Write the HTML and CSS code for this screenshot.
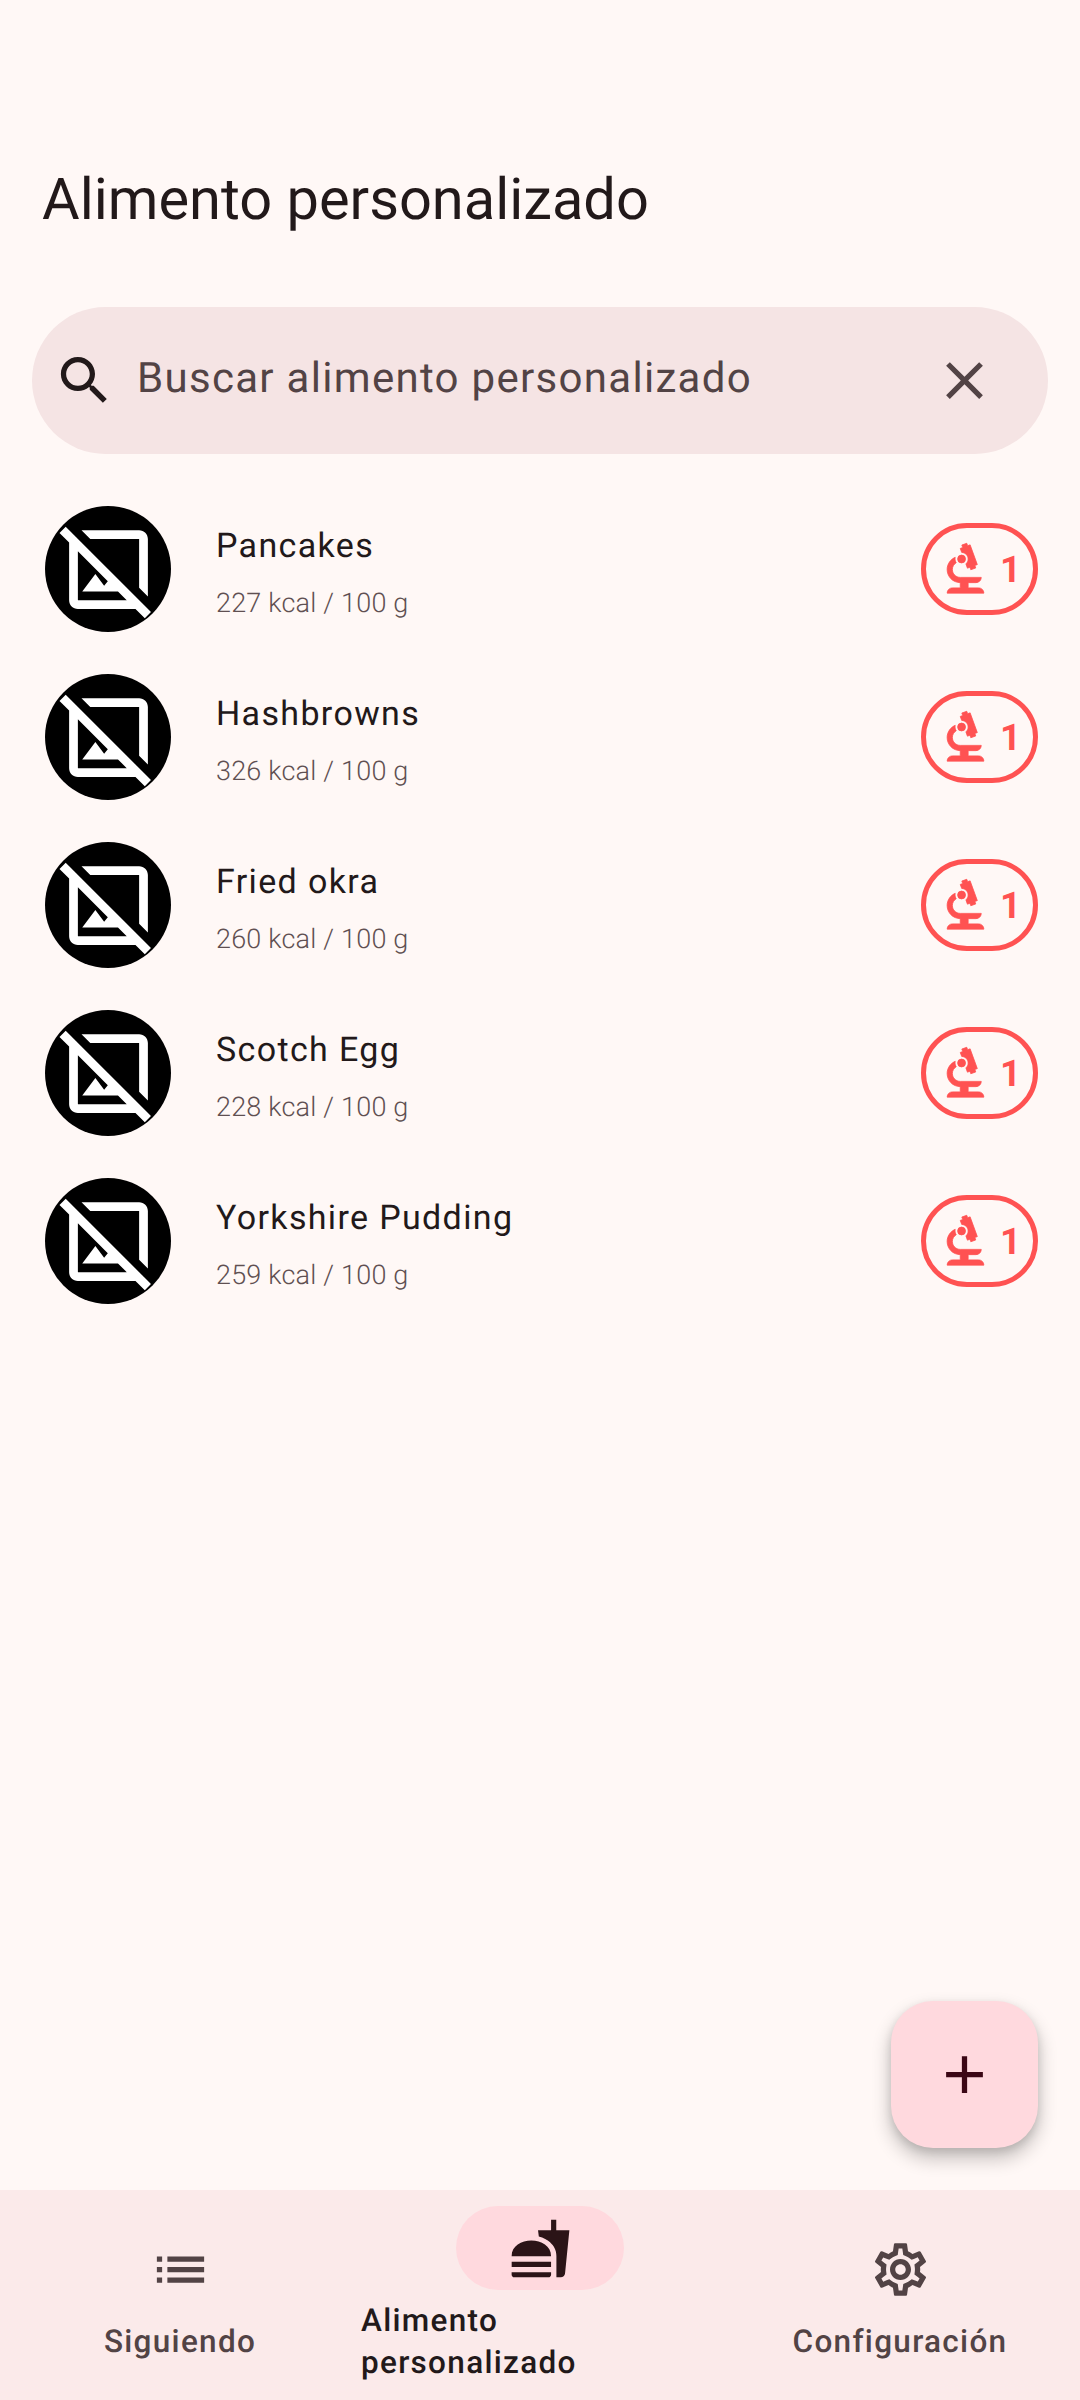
FILE: index.html
```html
<!DOCTYPE html>
<html lang="es">
<head>
    <meta charset="UTF-8">
    <meta name="viewport" content="width=device-width, initial-scale=1.0">
    <title>Alimento personalizado</title>
    <link rel="stylesheet" href="styles.css">
</head>
<body>
    <svg class="iconDefs" width="0" height="0">
        <defs>
            <symbol id="hideImage" viewBox="0 0 24 24"><path d="M19 5v11.17l2 2V5c0-1.1-.9-2-2-2H5.83l2 2H19zM2.22 2.22 .8 3.63 3 5.83V19c0 1.1.9 2 2 2h13.17l2.13 2.13 1.41-1.41L2.22 2.22zM5 19V7.83l6.84 6.84-.84 1.05L9 13l-3 4h8.17l2 2H5z"/></symbol>
            <symbol id="biotech" viewBox="0 0 24 24"><path d="M7 19c-1.1 0-2 .9-2 2h14c0-1.1-.9-2-2-2h-4v-2h3c1.1 0 2-.9 2-2h-8c-1.66 0-3-1.34-3-3 0-1.09.59-2.04 1.46-2.56C8.17 9.03 8 8.54 8 8c0-.21.04-.42.09-.62C6.28 8.13 5 9.92 5 12c0 2.76 2.24 5 5 5v2H7z"/><path d="M10.56 5.51C11.91 5.54 13 6.64 13 8c0 .75-.33 1.41-.85 1.87l.59 1.62.94-.34.34.94 1.88-.68-.34-.94.94-.34-2.74-7.52-.94.34-.34-.94-1.88.68.34.94-.94.35.56 1.53z"/><circle cx="10.5" cy="8" r="1.5"/></symbol>
        </defs>
    </svg>

    <header class="appBar">
        <h1 class="pageTitle">Alimento personalizado</h1>
    </header>

    <div class="searchBar">
        <svg class="searchIcon" viewBox="0 0 24 24"><path d="M15.5 14h-.79l-.28-.27C15.41 12.59 16 11.11 16 9.5 16 5.91 13.09 3 9.5 3S3 5.91 3 9.5 5.91 16 9.5 16c1.61 0 3.09-.59 4.23-1.57l.27.28v.79l5 4.99L20.49 19l-4.99-5zm-6 0C7.01 14 5 11.99 5 9.5S7.01 5 9.5 5 14 7.01 14 9.5 11.99 14 9.5 14z"/></svg>
        <span class="searchText">Buscar alimento personalizado</span>
        <svg class="closeIcon" viewBox="0 0 24 24"><path d="M19 6.41L17.59 5 12 10.59 6.41 5 5 6.41 10.59 12 5 17.59 6.41 19 12 13.41 17.59 19 19 17.59 13.41 12z"/></svg>
    </div>

    <ul class="foodList">
        <li class="foodRow">
            <div class="avatar"><svg class="avatarIcon"><use href="#hideImage"/></svg></div>
            <div class="foodInfo">
                <span class="foodName">Pancakes</span>
                <span class="foodKcal">227 kcal / 100 g</span>
            </div>
            <div class="scoreChip"><svg class="chipIcon"><use href="#biotech"/></svg><span class="chipCount">1</span></div>
        </li>
        <li class="foodRow">
            <div class="avatar"><svg class="avatarIcon"><use href="#hideImage"/></svg></div>
            <div class="foodInfo">
                <span class="foodName">Hashbrowns</span>
                <span class="foodKcal">326 kcal / 100 g</span>
            </div>
            <div class="scoreChip"><svg class="chipIcon"><use href="#biotech"/></svg><span class="chipCount">1</span></div>
        </li>
        <li class="foodRow">
            <div class="avatar"><svg class="avatarIcon"><use href="#hideImage"/></svg></div>
            <div class="foodInfo">
                <span class="foodName">Fried okra</span>
                <span class="foodKcal">260 kcal / 100 g</span>
            </div>
            <div class="scoreChip"><svg class="chipIcon"><use href="#biotech"/></svg><span class="chipCount">1</span></div>
        </li>
        <li class="foodRow">
            <div class="avatar"><svg class="avatarIcon"><use href="#hideImage"/></svg></div>
            <div class="foodInfo">
                <span class="foodName">Scotch Egg</span>
                <span class="foodKcal">228 kcal / 100 g</span>
            </div>
            <div class="scoreChip"><svg class="chipIcon"><use href="#biotech"/></svg><span class="chipCount">1</span></div>
        </li>
        <li class="foodRow">
            <div class="avatar"><svg class="avatarIcon"><use href="#hideImage"/></svg></div>
            <div class="foodInfo">
                <span class="foodName">Yorkshire Pudding</span>
                <span class="foodKcal">259 kcal / 100 g</span>
            </div>
            <div class="scoreChip"><svg class="chipIcon"><use href="#biotech"/></svg><span class="chipCount">1</span></div>
        </li>
    </ul>

    <button class="addButton" type="button">
        <svg class="addIcon" viewBox="0 0 24 24"><path d="M19 13h-6v6h-2v-6H5v-2h6V5h2v6h6v2z"/></svg>
    </button>

    <nav class="bottomNav">
        <div class="navItem">
            <div class="navPill">
                <svg class="navIcon" viewBox="0 0 24 24"><path d="M3 13h2v-2H3v2zm0 4h2v-2H3v2zm0-8h2V7H3v2zm4 4h14v-2H7v2zm0 4h14v-2H7v2zM7 7v2h14V7H7z"/></svg>
            </div>
            <span class="navLabel">Siguiendo</span>
        </div>
        <div class="navItem navItemActive">
            <div class="navPill">
                <svg class="navIcon" viewBox="0 0 24 24"><path d="M18.06 22.99h1.66c.84 0 1.53-.64 1.63-1.46L23 5.05h-5V1h-1.97v4.05h-4.97l.3 2.34c1.71.47 3.31 1.3 4.27 2.24 1.44 1.42 2.43 2.89 2.43 5.29v8.07zM1 21.99V21h15.03v.99c0 .55-.45 1-1.01 1H2.01c-.56 0-1.01-.45-1.01-1zm15.03-7c0-8-15.03-8-15.03 0h15.03zM1.02 17h15v2h-15z"/></svg>
            </div>
            <span class="navLabel">Alimento<br>personalizado</span>
        </div>
        <div class="navItem">
            <div class="navPill">
                <svg class="navIcon" viewBox="0 0 24 24"><path d="M19.43 12.98c.04-.32.07-.64.07-.98 0-.34-.03-.66-.07-.98l2.11-1.65c.19-.15.24-.42.12-.64l-2-3.46c-.09-.16-.26-.25-.44-.25-.06 0-.12.01-.17.03l-2.49 1c-.52-.4-1.08-.73-1.69-.98l-.38-2.65C14.46 2.18 14.25 2 14 2h-4c-.25 0-.46.18-.49.42l-.38 2.65c-.61.25-1.17.59-1.69.98l-2.49-1c-.06-.02-.12-.03-.18-.03-.17 0-.34.09-.43.25l-2 3.46c-.13.22-.07.49.12.64l2.11 1.65c-.04.32-.07.65-.07.98 0 .33.03.66.07.98l-2.11 1.65c-.19.15-.24.42-.12.64l2 3.46c.09.16.26.25.44.25.06 0 .12-.01.17-.03l2.49-1c.52.4 1.08.73 1.69.98l.38 2.65c.03.24.24.42.49.42h4c.25 0 .46-.18.49-.42l.38-2.65c.61-.25 1.17-.59 1.69-.98l2.49 1c.06.02.12.03.18.03.17 0 .34-.09.43-.25l2-3.46c.12-.22.07-.49-.12-.64l-2.11-1.65zm-1.98-1.71c.04.31.05.52.05.73 0 .21-.02.43-.05.73l-.14 1.13.89.7 1.08.84-.7 1.21-1.27-.51-1.04-.42-.9.68c-.43.32-.84.56-1.25.73l-1.06.43-.16 1.13-.2 1.35h-1.4l-.19-1.35-.16-1.13-1.06-.43c-.43-.18-.83-.41-1.23-.71l-.91-.7-1.06.43-1.27.51-.7-1.21 1.08-.84.89-.7-.14-1.13c-.03-.31-.05-.54-.05-.74s.02-.43.05-.73l.14-1.13-.89-.7-1.08-.84.7-1.21 1.27.51 1.04.42.9-.68c.43-.32.84-.56 1.25-.73l1.06-.43.16-1.13.2-1.35h1.39l.19 1.35.16 1.13 1.06.43c.43.18.83.41 1.23.71l.91.7 1.06-.43 1.27-.51.7 1.21-1.07.85-.89.7.14 1.13zM12 8c-2.21 0-4 1.79-4 4s1.79 4 4 4 4-1.79 4-4-1.79-4-4-4zm0 6c-1.1 0-2-.9-2-2s.9-2 2-2 2 .9 2 2-.9 2-2 2z"/></svg>
            </div>
            <span class="navLabel">Configuración</span>
        </div>
    </nav>
</body>
</html>
```

FILE: styles.css
```css
* {
    box-sizing: border-box;
}

body {
    font-family: Roboto, sans-serif;
    background-color: #fff8f6;
    color: #22191a;
    margin: 0;
    height: 2400px;
    width: 1080px;
    display: flex;
    flex-direction: column;
    overflow: hidden;
    text-rendering: geometricPrecision;
}

.iconDefs {
    position: absolute;
}

.appBar {
    padding: 164px 42px 0;
    height: 307px;
}

.pageTitle {
    margin: 0;
    font-size: 57.75px;
    line-height: 72px;
    font-weight: 400;
}

.searchBar {
    margin: 0 32px;
    height: 147px;
    border-radius: 74px;
    background-color: #f5e4e4;
    display: flex;
    align-items: center;
    padding: 0 52px 0 21px;
}

.searchIcon {
    width: 63px;
    height: 63px;
    fill: #22191a;
}

.searchText {
    flex: 1;
    margin-left: 21px;
    padding-bottom: 4px;
    font-size: 42px;
    letter-spacing: 1.3px;
    color: #524345;
}

.closeIcon {
    width: 63px;
    height: 63px;
    fill: #524345;
}

.foodList {
    list-style: none;
    margin: 31px 0 0;
    padding: 0;
}

.foodRow {
    height: 168px;
    display: flex;
    align-items: center;
    padding: 0 42px 0 45px;
}

.avatar {
    width: 126px;
    height: 126px;
    border-radius: 50%;
    background-color: #000;
    display: flex;
    align-items: center;
    justify-content: center;
}

.avatarIcon {
    width: 105px;
    height: 105px;
    fill: #fff;
}

.foodInfo {
    flex: 1;
    margin-left: 45px;
    padding-top: 7px;
    display: flex;
    flex-direction: column;
    gap: 17px;
}

.foodName {
    font-size: 34px;
    line-height: 44px;
    letter-spacing: 1.35px;
}

.foodKcal {
    font-size: 27px;
    line-height: 36px;
    font-weight: 300;
    letter-spacing: 0.2px;
    color: #5f5052;
}

.scoreChip {
    width: 117px;
    height: 92px;
    border: 5.5px solid #ff5252;
    border-radius: 46px;
    display: flex;
    align-items: center;
    padding-left: 8px;
    color: #ff5252;
}

.chipIcon {
    width: 63px;
    height: 63px;
    fill: #ff5252;
    stroke: #ff5252;
    stroke-width: 0.3;
    flex-shrink: 0;
}

.chipCount {
    margin-left: 3px;
    font-size: 36.75px;
    font-weight: 700;
}

.addButton {
    margin: auto 42px 42px auto;
    width: 147px;
    height: 147px;
    border: none;
    border-radius: 42px;
    padding: 0;
    background-color: #ffd9de;
    box-shadow: 0 10px 18px 2px rgba(0, 0, 0, 0.2), 0 4px 8px rgba(0, 0, 0, 0.12);
    display: flex;
    align-items: center;
    justify-content: center;
}

.addIcon {
    width: 63px;
    height: 63px;
    fill: #3b0715;
}

.bottomNav {
    height: 210px;
    background-color: #fbeaea;
    display: grid;
    grid-template-columns: repeat(3, 360px);
}

.navItem {
    display: flex;
    flex-direction: column;
    align-items: center;
    justify-content: center;
    gap: 10px;
}

.navPill {
    width: 168px;
    height: 84px;
    border-radius: 42px;
    display: flex;
    align-items: center;
    justify-content: center;
}

.navIcon {
    width: 63px;
    height: 63px;
    fill: #524345;
}

.navLabel {
    font-size: 31.5px;
    line-height: 42px;
    font-weight: 500;
    letter-spacing: 1.3px;
    color: #524345;
}

.navItemActive .navPill {
    background-color: #ffd9de;
}

.navItemActive .navIcon {
    fill: #2b1417;
}

.navItemActive .navLabel {
    align-self: flex-start;
    margin-left: 1px;
    color: #22191a;
}
```
